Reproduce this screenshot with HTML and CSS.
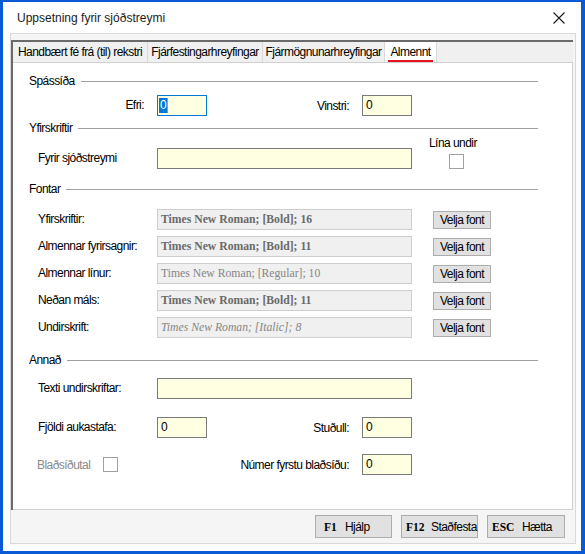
FILE: index.html
```html
<!DOCTYPE html>
<html lang="is">
<head>
<meta charset="utf-8">
<title>Uppsetning fyrir sjóðstreymi</title>
<link rel="stylesheet" href="styles.css">
</head>
<body>
<div class="window">
  <div class="titlebar">
    <span class="title">Uppsetning fyrir sjóðstreymi</span>
    <svg class="close" width="12" height="12" viewBox="0 0 12 12"><path d="M0.5 0.5 L11.5 11.5 M11.5 0.5 L0.5 11.5" stroke="#1a1a1a" stroke-width="1.1" fill="none"/></svg>
  </div>
  <div class="panel">
    <div class="tabctl">
      <div class="tabs">
        <div class="tab t1">Handbært fé frá (til) rekstri</div>
        <div class="tab t2">Fjárfestingarhreyfingar</div>
        <div class="tab t3">Fjármögnunarhreyfingar</div>
        <div class="tab t4 active"><span class="ul">Almennt</span></div>
      </div>
      <div class="content">
        <div class="sec s1"><span>Spássíða</span><i></i></div>
        <div class="row r1">
          <span class="lbl right">Efri:</span>
          <div class="inp sm focus"><span class="sel">0</span></div>
          <span class="rlbl">Vinstri:</span>
          <div class="inp sm">0</div>
        </div>

        <div class="sec s2"><span>Yfirskriftir</span><i></i></div>
        <div class="row r2">
          <span class="lbl">Fyrir sjóðstreymi</span>
          <div class="inp wide"></div>
          <div class="lina"><span>Lína undir</span><div class="chk"></div></div>
        </div>

        <div class="sec s3"><span>Fontar</span><i></i></div>
        <div class="row fr first">
          <span class="lbl">Yfirskriftir:</span>
          <div class="fbox b">Times New Roman; [Bold]; 16</div>
          <button class="btn">Velja font</button>
        </div>
        <div class="row fr">
          <span class="lbl">Almennar fyrirsagnir:</span>
          <div class="fbox b">Times New Roman; [Bold]; 11</div>
          <button class="btn">Velja font</button>
        </div>
        <div class="row fr">
          <span class="lbl">Almennar línur:</span>
          <div class="fbox reg">Times New Roman; [Regular]; 10</div>
          <button class="btn">Velja font</button>
        </div>
        <div class="row fr">
          <span class="lbl">Neðan máls:</span>
          <div class="fbox b">Times New Roman; [Bold]; 11</div>
          <button class="btn">Velja font</button>
        </div>
        <div class="row fr">
          <span class="lbl">Undirskrift:</span>
          <div class="fbox it">Times New Roman; [Italic]; 8</div>
          <button class="btn">Velja font</button>
        </div>

        <div class="sec s4"><span>Annað</span><i></i></div>
        <div class="row r5">
          <span class="lbl">Texti undirskriftar:</span>
          <div class="inp wide"></div>
        </div>
        <div class="row r6">
          <span class="lbl">Fjöldi aukastafa:</span>
          <div class="inp sm">0</div>
          <span class="rlbl">Stuðull:</span>
          <div class="inp sm">0</div>
        </div>
        <div class="row r7">
          <div class="bl"><span class="bltxt">Blaðsíðutal</span><div class="chk"></div></div>
          <span class="rlbl">Númer fyrstu blaðsíðu:</span>
          <div class="inp sm">0</div>
        </div>
      </div>
    </div>
    <div class="footer">
      <button class="fbtn k1"><b>F1</b><span>Hjálp</span></button>
      <button class="fbtn k2"><b>F12</b><span>Staðfesta</span></button>
      <button class="fbtn k3"><b>ESC</b><span>Hætta</span></button>
    </div>
  </div>
</div>
</body>
</html>
```

FILE: styles.css
```css
html, body {
  margin: 0;
  padding: 0;
  background: #ffffff;
}

.window {
  width: 585px;
  height: 554px;
  box-sizing: border-box;
  border-style: solid;
  border-color: #0a5ad6;
  border-width: 2px 4px 3px 3px;
  background: #ffffff;
  display: flex;
  flex-direction: column;
  font-family: "Liberation Sans", Arial, sans-serif;
  font-size: 12px;
  letter-spacing: -0.55px;
  color: #000;
}

.titlebar {
  height: 31px;
  flex: none;
  display: flex;
  align-items: center;
  justify-content: space-between;
  padding: 0 16px 0 14px;
}

.title {
  font-family: "Liberation Sans", Arial, sans-serif;
  font-size: 12px;
  letter-spacing: 0;
  color: #1a1a1a;
}

.close {
  display: block;
}

.panel {
  flex: 1;
  margin: 0 5px 7px 7px;
  border: 1px solid #d9d9d9;
  background: #f5f5f5;
  padding: 6px 2px 0 0;
  display: flex;
  flex-direction: column;
}

.tabctl {
  height: 470px;
  flex: none;
  box-sizing: border-box;
  border-top: 2px solid #6a6a6a;
  border-left: 2px solid #6a6a6a;
  display: flex;
  flex-direction: column;
}

.tabs {
  height: 20px;
  flex: none;
  display: flex;
  background: #f0f0f0;
}

.tab {
  box-sizing: border-box;
  height: 20px;
  line-height: 20px;
  text-align: center;
  border-right: 1px solid #d9d9d9;
  white-space: nowrap;
  overflow: hidden;
}

.t1 { width: 135px; }
.t2 { width: 115px; }
.t3 { width: 122px; }
.t4 { width: 52px; }

.tab.active {
  background: #ffffff;
  border-left: 1px solid #d9d9d9;
  margin-left: -1px;
  width: 53px;
}

.ul {
  display: inline-block;
  line-height: 15px;
  padding: 0 2px;
  border-bottom: 2px solid #e81123;
}

.content {
  flex: 1;
  background: #ffffff;
  border: 1px solid #d0d0d0;
  border-left: none;
  padding: 11px 34px 0 16px;
}

.sec {
  display: flex;
  align-items: center;
  height: 14px;
  gap: 6px;
}

.sec i {
  flex: 1;
  height: 1px;
  background: #a0a0a0;
}

.s2 { margin-top: 5px; }
.s3 { margin-top: 13px; }
.s4 { margin-top: 15px; }

.row {
  display: flex;
  align-items: center;
  height: 21px;
}

.r1 { margin-top: 7px; }

.r2 {
  height: auto;
  align-items: flex-end;
  margin-top: 1px;
}

.fr { margin-top: 6px; }
.fr.first { margin-top: 13px; }
.r5 { margin-top: 11px; }
.r6 { margin-top: 18px; }
.r7 { margin-top: 16px; }

.lbl {
  width: 128px;
  flex: none;
  box-sizing: border-box;
  padding-left: 9px;
  line-height: 21px;
  white-space: nowrap;
}

.lbl.right {
  text-align: right;
  padding-right: 13px;
}

.rlbl {
  width: 155px;
  flex: none;
  box-sizing: border-box;
  text-align: right;
  padding-right: 13px;
  white-space: nowrap;
}

.inp {
  height: 21px;
  flex: none;
  box-sizing: border-box;
  border: 1px solid #7a7a7a;
  background: #ffffe1;
  padding-left: 3px;
  line-height: 19px;
}

.sm { width: 50px; }
.wide { width: 255px; }

.inp.focus {
  border-color: #0078d7;
  padding-left: 1px;
  display: flex;
  align-items: center;
}

.sel {
  display: inline-block;
  height: 15px;
  line-height: 15px;
  padding: 0 1px;
  background: #0078d7;
  color: #ffffff;
  border-right: 1px solid #e8891a;
}

.lina {
  margin-left: 17px;
  display: flex;
  flex-direction: column;
  align-items: center;
}

.lina span {
  line-height: 14px;
  white-space: nowrap;
}

.chk {
  width: 15px;
  height: 15px;
  flex: none;
  box-sizing: border-box;
  border: 1px solid #a0a0a0;
  background: #ffffff;
}

.lina .chk {
  margin-top: 4px;
  margin-left: 7px;
}

.fbox {
  width: 255px;
  height: 21px;
  flex: none;
  box-sizing: border-box;
  border: 1px solid #cdcdcd;
  background: #f0f0f0;
  font-family: "Liberation Serif", "Times New Roman", serif;
  font-size: 11.7px;
  letter-spacing: 0;
  color: #6a6a6a;
  padding-left: 3px;
  line-height: 19px;
  white-space: nowrap;
}

.fbox.b { font-weight: bold; }
.fbox.reg { color: #858585; }
.fbox.it { font-style: italic; color: #858585; }

.btn {
  margin-left: 21px;
  width: 58px;
  height: 18px;
  flex: none;
  box-sizing: border-box;
  border: 1px solid #adadad;
  background: #e1e1e1;
  font: inherit;
  letter-spacing: inherit;
  color: #000;
  padding: 0;
  line-height: 16px;
}

.bl {
  width: 178px;
  flex: none;
  box-sizing: border-box;
  padding-left: 8px;
  display: flex;
  align-items: center;
  color: #8a8a8a;
}

.bltxt {
  width: 66px;
  white-space: nowrap;
}

.footer {
  flex: 1;
  display: flex;
  justify-content: flex-end;
  align-items: flex-start;
  gap: 9px;
  padding: 5px 8px 0 0;
}

.fbtn {
  height: 23px;
  width: 77px;
  flex: none;
  box-sizing: border-box;
  border: 1px solid #adadad;
  background: #e1e1e1;
  display: flex;
  align-items: center;
  font: inherit;
  letter-spacing: inherit;
  color: #000;
  padding: 0;
  text-align: left;
  white-space: nowrap;
}

.fbtn b {
  flex: none;
  font-family: "Liberation Serif", "Times New Roman", serif;
  font-weight: bold;
  font-size: 11.5px;
  letter-spacing: 0;
}

.k1 { padding-left: 8px; }
.k1 b { width: 21px; }
.k2 { padding-left: 4px; }
.k2 b { width: 25px; }
.k3 { width: 78px; padding-left: 4px; }
.k3 b { width: 30px; }
```
